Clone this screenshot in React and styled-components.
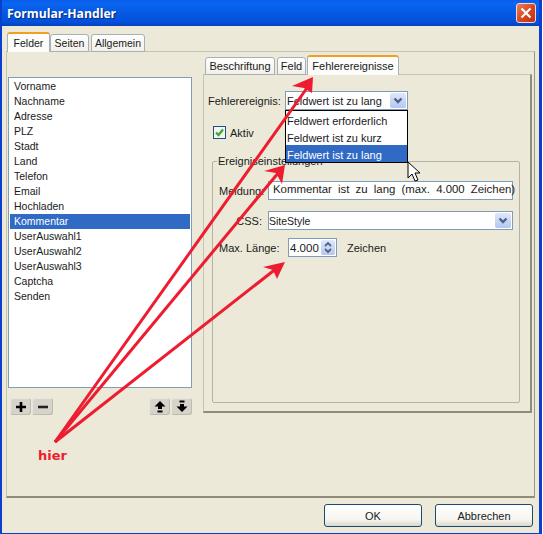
import styled, { createGlobalStyle } from 'styled-components'

const GlobalStyle = createGlobalStyle`
  html, body {
    margin: 0;
    padding: 0;
    background: #fff;
  }
  * {
    box-sizing: border-box;
  }
`

const Window = styled.div`
  position: relative;
  width: 542px;
  height: 534px;
  display: flex;
  flex-direction: column;
  background: #ece9d8;
  border: solid #0a3fd0;
  border-width: 0 3px 1px 2px;
  font-family: 'Liberation Sans', Arial, sans-serif;
  font-size: 11px;
  color: #1a1a1a;
  overflow: hidden;
`

const TitleBar = styled.div`
  flex: 0 0 26px;
  margin: 0 -3px 0 -2px;
  padding: 0 6px 0 7px;
  display: flex;
  align-items: center;
  justify-content: space-between;
  background: linear-gradient(#0a5be8 0%, #0a66f0 12%, #0458e2 55%, #0350dc 85%, #0340b8 100%);
`

const Title = styled.span`
  font-family: 'Open Sans', sans-serif;
  font-size: 12.2px;
  font-weight: 700;
  color: #fff;
  text-shadow: 1px 1px 1px #0a2a80;
`

const CloseButton = styled.div`
  width: 20px;
  height: 20px;
  border: 1px solid #f4d8d0;
  border-radius: 3px;
  background: linear-gradient(135deg, #e8805c, #d8431c 55%, #c0300f);
  display: flex;
  align-items: center;
  justify-content: center;
`

const Body = styled.div`
  flex: 1;
  display: flex;
  flex-direction: column;
  padding: 6px 4px 6px 4px;
`

const TabRow = styled.div`
  display: flex;
  align-items: flex-end;
  padding-left: ${(p) => p.$indent || 0}px;
  font-size: ${(p) => p.$size || 11}px;
  position: relative;
  z-index: 1;
  margin-bottom: -1px;
`

const Tab = styled.div`
  width: ${(p) => p.$width}px;
  margin-right: ${(p) => p.$gap || 0}px;
  height: ${(p) => (p.$active ? 20 : 18)}px;
  display: flex;
  align-items: center;
  justify-content: center;
  border: 1px solid #a5b0b8;
  border-bottom: ${(p) => (p.$active ? 'none' : '1px solid #a5b0b8')};
  border-top: ${(p) => (p.$active ? '2px solid #f0a020' : '1px solid #a5b0b8')};
  border-radius: 3px 3px 0 0;
  background: ${(p) => (p.$active ? '#fcfcfa' : 'linear-gradient(#fff, #f2f0e8)')};
  white-space: nowrap;
`

const MainPanel = styled.div`
  height: 447px;
  display: flex;
  gap: 11px;
  padding-left: 1px;
  border: 1px solid #c6c4b6;
  border-right: 1px solid #9a9884;
  border-bottom: 2px solid #8f8d7a;
`

const LeftColumn = styled.div`
  width: 184px;
  padding-top: 25px;
  display: flex;
  flex-direction: column;
`

const FieldList = styled.ul`
  list-style: none;
  margin: 0;
  height: 311px;
  padding: 1px 1px;
  border: 1px solid #7f9db9;
  background: #fff;
  font-size: 10.5px;
`

const FieldItem = styled.li`
  height: 15px;
  line-height: 15px;
  padding-left: 4px;
  background: ${(p) => (p.$selected ? '#316ac5' : 'transparent')};
  color: ${(p) => (p.$selected ? '#fff' : '#1a1a1a')};
`

const ListToolbar = styled.div`
  display: flex;
  justify-content: space-between;
  padding: 10px 0 0 2px;
`

const IconGroup = styled.div`
  display: flex;
  gap: 1px;
`

const IconButton = styled.div`
  width: 21px;
  height: 17px;
  border-radius: 3px;
  background: #d6d3ca;
  box-shadow: inset -1px -1px 0 #bdbab0, inset 1px 1px 0 #e8e6df;
  display: flex;
  align-items: center;
  justify-content: center;
`

const RightColumn = styled.div`
  width: 329px;
  padding-top: 3px;
  display: flex;
  flex-direction: column;
`

const InnerPanel = styled.div`
  height: 339px;
  padding: 16px 0 0 4px;
  border: 1px solid #c6c4b6;
  border-right: 2px solid #8f8d7a;
  border-bottom: 2px solid #8f8d7a;
  display: flex;
  flex-direction: column;
`

const EventRow = styled.div`
  display: flex;
  align-items: center;
`

const EventLabel = styled.span`
  width: 77px;
  flex: none;
`

const ComboBox = styled.div`
  position: relative;
  width: ${(p) => p.$width || 123}px;
  height: 19px;
  margin-left: ${(p) => p.$offset || 0}px;
  display: flex;
  align-items: center;
  justify-content: space-between;
  padding: 0 1px 0 ${(p) => p.$pad ?? 1}px;
  font-size: ${(p) => p.$size || 11}px;
  background: #fff;
  border: 1px solid #7f9db9;
`

const ComboArrow = styled.div`
  width: 16px;
  height: 15px;
  border-radius: 2px;
  background: linear-gradient(#dfe8fb, #b4c7f0);
  display: flex;
  align-items: center;
  justify-content: center;
`

const Popup = styled.div`
  position: absolute;
  left: -1px;
  top: 18px;
  width: 123px;
  height: 53px;
  background: #fff;
  border: 1px solid #000;
  z-index: 3;
`

const PopupItem = styled.div`
  height: 17px;
  line-height: 20px;
  padding-left: 1px;
  background: ${(p) => (p.$selected ? '#316ac5' : 'transparent')};
  color: ${(p) => (p.$selected ? '#fff' : '#1a1a1a')};
`

const CheckRow = styled.div`
  display: flex;
  align-items: center;
  gap: 4px;
  margin: 16px 0 0 5px;
`

const CheckBox = styled.div`
  width: 13px;
  height: 13px;
  border: 1px solid #1c5180;
  background: #f4f3ec;
  display: flex;
  align-items: center;
  justify-content: center;
`

const GroupBox = styled.fieldset`
  width: 308px;
  height: 247px;
  margin: 17px 0 0 4px;
  padding: 15px 6px 0 6px;
  border: 1px solid #b4b2a6;
  border-radius: 2px;
  display: flex;
  flex-direction: column;
`

const GroupLegend = styled.legend`
  margin-left: -2px;
  padding: 0 1px;
  line-height: 10px;
`

const FormRow = styled.div`
  display: flex;
  align-items: center;
  margin-bottom: ${(p) => p.$after || 0}px;
`

const FormLabel = styled.span`
  width: ${(p) => p.$width || 43}px;
  flex: none;
  text-align: ${(p) => p.$align || 'right'};
`

const TextInput = styled.div`
  width: 245px;
  height: 19px;
  margin-left: 6px;
  padding-left: 4px;
  font-size: 11.4px;
  line-height: 17px;
  word-spacing: 3px;
  text-rendering: geometricPrecision;
  white-space: nowrap;
  background: #fff;
  border: 1px solid #7f9db9;
`

const Spinner = styled.div`
  width: 49px;
  height: 19px;
  display: flex;
  align-items: center;
  justify-content: space-between;
  padding: 0 1px 0 1px;
  font-size: 11.5px;
  background: #fff;
  border: 1px solid #7f9db9;
`

const SpinnerArrows = styled.div`
  width: 14px;
  height: 15px;
  border-radius: 2px;
  background: linear-gradient(#dfe8fb, #b4c7f0);
  display: flex;
  align-items: center;
  justify-content: center;
`

const Unit = styled.span`
  margin-left: 10px;
`

const Footer = styled.div`
  flex: 1;
  display: flex;
  justify-content: flex-end;
  align-items: flex-start;
  gap: 13px;
  padding: 6px 2px 0 0;
`

const DialogButton = styled.div`
  width: 98px;
  height: 23px;
  display: flex;
  align-items: center;
  justify-content: center;
  border: 1px solid #1c4a6e;
  border-radius: 3px;
  background: linear-gradient(#ffffff, #f6f5ef 70%, #dcd8cc);
`

const Annotation = styled.svg`
  position: absolute;
  left: -2px;
  top: 0;
  z-index: 5;
  pointer-events: none;
`

const HierLabel = styled.span`
  position: absolute;
  left: 36px;
  top: 448px;
  z-index: 5;
  font-family: 'DejaVu Sans', sans-serif;
  font-size: 13px;
  font-weight: 700;
  color: #ee1c30;
`

const Chevron = () => (
  <svg width="10" height="8" viewBox="0 0 10 8">
    <path d="M1.5 1.5 L5 5 L8.5 1.5" fill="none" stroke="#4d6185" strokeWidth="2.4" />
  </svg>
)

const FIELDS = [
  'Vorname', 'Nachname', 'Adresse', 'PLZ', 'Stadt', 'Land', 'Telefon', 'Email', 'Hochladen',
  'Kommentar', 'UserAuswahl1', 'UserAuswahl2', 'UserAuswahl3', 'Captcha', 'Senden',
]

const ARROWS = [
  { tip: '313,77', line: '55,442 307,88', head: '313,77 292,86 304,88 312,93' },
  { tip: '285,166', line: '55,442 279,172', head: '285,165 264,171 276,173 282,184' },
  { tip: '285,262', line: '55,442 277,268', head: '285,262 263,267 273,270 277,279' },
]

export default function App() {
  return (
    <>
      <GlobalStyle />
      <Window>
        <TitleBar>
          <Title>Formular-Handler</Title>
          <CloseButton>
            <svg width="12" height="12" viewBox="0 0 12 12">
              <path d="M1.5 1.5 L10.5 10.5 M10.5 1.5 L1.5 10.5" stroke="#fff" strokeWidth="2.2" />
            </svg>
          </CloseButton>
        </TitleBar>
        <Body>
          <TabRow $indent={1} $size={10.5}>
            <Tab $active $width={43}>Felder</Tab>
            <Tab $width={39} $gap={2}>Seiten</Tab>
            <Tab $width={54}>Allgemein</Tab>
          </TabRow>
          <MainPanel>
            <LeftColumn>
              <FieldList>
                {FIELDS.map((name) => (
                  <FieldItem key={name} $selected={name === 'Kommentar'}>{name}</FieldItem>
                ))}
              </FieldList>
              <ListToolbar>
                <IconGroup>
                  <IconButton>
                    <svg width="12" height="12" viewBox="0 0 12 12">
                      <path d="M6 1 V11 M1 6 H11" stroke="#000" strokeWidth="2.6" />
                    </svg>
                  </IconButton>
                  <IconButton>
                    <svg width="12" height="12" viewBox="0 0 12 12">
                      <path d="M1 6 H11" stroke="#222" strokeWidth="2.6" />
                    </svg>
                  </IconButton>
                </IconGroup>
                <IconGroup>
                  <IconButton>
                    <svg width="12" height="13" viewBox="0 0 12 13">
                      <path d="M6 1 L11.5 6.5 H8 V9 H4 V6.5 H0.5 Z M3.5 10.5 H8.5 V12.5 H3.5 Z" fill="#000" />
                    </svg>
                  </IconButton>
                  <IconButton>
                    <svg width="12" height="13" viewBox="0 0 12 13">
                      <path d="M6 12 L11.5 6.5 H8 V4 H4 V6.5 H0.5 Z M3.5 0.5 H8.5 V2.5 H3.5 Z" fill="#000" />
                    </svg>
                  </IconButton>
                </IconGroup>
              </ListToolbar>
            </LeftColumn>
            <RightColumn>
              <TabRow $indent={2}>
                <Tab $width={70} $gap={2}>Beschriftung</Tab>
                <Tab $width={29} $gap={1}>Feld</Tab>
                <Tab $active $width={92}>Fehlerereignisse</Tab>
              </TabRow>
              <InnerPanel>
                <EventRow>
                  <EventLabel>Fehlerereignis:</EventLabel>
                  <ComboBox>
                    <span>Feldwert ist zu lang</span>
                    <ComboArrow><Chevron /></ComboArrow>
                    <Popup>
                      <PopupItem>Feldwert erforderlich</PopupItem>
                      <PopupItem>Feldwert ist zu kurz</PopupItem>
                      <PopupItem $selected>Feldwert ist zu lang</PopupItem>
                    </Popup>
                  </ComboBox>
                </EventRow>
                <CheckRow>
                  <CheckBox>
                    <svg width="11" height="11" viewBox="0 0 11 11">
                      <path d="M2 5.5 L4.5 8 L9 2.5" fill="none" stroke="#35a835" strokeWidth="2.2" />
                    </svg>
                  </CheckBox>
                  <span>Aktiv</span>
                </CheckRow>
                <GroupBox>
                  <GroupLegend>Ereigniseinstellungen</GroupLegend>
                  <FormRow $after={11}>
                    <FormLabel>Meldung:</FormLabel>
                    <TextInput>Kommentar ist zu lang (max. 4.000 Zeichen)</TextInput>
                  </FormRow>
                  <FormRow $after={8}>
                    <FormLabel>CSS:</FormLabel>
                    <ComboBox $width={245} $offset={6} $pad={0} $size={10.5}>
                      <span>SiteStyle</span>
                      <ComboArrow><Chevron /></ComboArrow>
                    </ComboBox>
                  </FormRow>
                  <FormRow>
                    <FormLabel $width={69} $align="left">Max. Länge:</FormLabel>
                    <Spinner>
                      <span>4.000</span>
                      <SpinnerArrows>
                        <svg width="10" height="13" viewBox="0 0 10 13">
                          <path d="M2 5 L5 2 L8 5 M2 8 L5 11 L8 8" fill="none" stroke="#4d6185" strokeWidth="1.8" />
                        </svg>
                      </SpinnerArrows>
                    </Spinner>
                    <Unit>Zeichen</Unit>
                  </FormRow>
                </GroupBox>
              </InnerPanel>
            </RightColumn>
          </MainPanel>
          <Footer>
            <DialogButton>OK</DialogButton>
            <DialogButton>Abbrechen</DialogButton>
          </Footer>
        </Body>

        <Annotation width="543" height="534" viewBox="0 0 543 534">
          {ARROWS.map((a) => (
            <g key={a.tip}>
              <polyline points={a.line} fill="none" stroke="#ee1c30" strokeWidth="3" />
              <polygon points={a.head} fill="#ee1c30" />
            </g>
          ))}
          <path
            d="M408 162 V178 L412 174 L415 181 L418 180 L415 173 L420 173 Z"
            fill="#fff"
            stroke="#000"
            strokeWidth="1"
          />
        </Annotation>
        <HierLabel>hier</HierLabel>
      </Window>
    </>
  )
}
